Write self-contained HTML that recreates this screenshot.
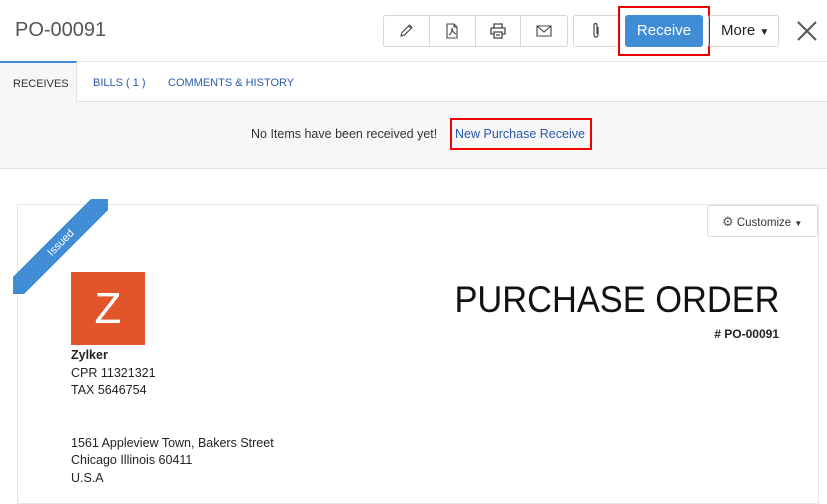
<!DOCTYPE html>
<html><head><meta charset="utf-8"><style>
*{box-sizing:border-box;margin:0;padding:0}
body{width:827px;height:489px;overflow:hidden;background:#fff;font-family:"Liberation Sans",sans-serif;position:relative;color:#222}
.abs{position:absolute}
.title{left:15px;top:19px;font-size:20px;color:#555}
.grp{top:15px;height:32px;border:1px solid #d6d6d6;border-radius:3px;display:flex;background:#fff}
.grp div{width:46px;height:30px;border-right:1px solid #d6d6d6;display:flex;align-items:center;justify-content:center}
.grp div:last-child{border-right:none}
.recv{left:625px;top:15px;width:78px;height:32px;background:#408dd6;border-radius:3px;color:#fff;font-size:15px;text-align:center;line-height:32px}
.redbox{border:2px solid #e00}
.more{left:708px;top:15px;width:71px;height:32px;border:1px solid #d6d6d6;border-radius:3px;font-size:15px;line-height:30px;padding-left:12px;color:#222}
.tabs{top:61px;left:0;width:827px;height:41px;border-top:1px solid #e6e6e6;border-bottom:1px solid #e2e2e2;font-size:11px}
.band{top:102px;left:0;width:827px;height:67px;background:#f7f7f7;border-bottom:1px solid #e2e2e2}
.card{left:17px;top:204px;width:802px;height:300px;border:1px solid #e6e6e6}
</style></head><body>
<div class="abs title">PO-00091</div>
<div class="abs grp" style="left:383px;width:185px">
<div><svg width="16" height="16" viewBox="0 0 16 16" fill="none" stroke="#444" stroke-width="1.1"><path d="M3 13l1-3.5 7.5-7.5 2.5 2.5-7.5 7.5z M10.5 3l2.5 2.5"/></svg></div>
<div><svg width="14" height="16" viewBox="0 0 14 16" fill="none" stroke="#444" stroke-width="1.1"><path d="M2 1h7l3 3v11H2z M9 1v3h3 M4 12c2-1 3-4 3-7 0 3 2 5 4 6"/></svg></div>
<div><svg width="18" height="16" viewBox="0 0 18 16" fill="none" stroke="#444" stroke-width="1.3"><path d="M5 5V1h8v4 M2 5h14v6h-3 M5 11H2V5 M5 9h8v6H5z M7 12h4"/></svg></div>
<div><svg width="16" height="12" viewBox="0 0 16 12" fill="none" stroke="#444" stroke-width="1.1"><path d="M1 1h14v10H1z M1 1l7 6 7-6"/></svg></div>
</div>
<div class="abs grp" style="left:573px;width:46px"><div><svg width="10" height="18" viewBox="0 0 10 18" fill="none" stroke="#444" stroke-width="1.2"><path d="M7 5v8a2 2 0 01-4 0V3a1.5 1.5 0 013 0v9"/></svg></div></div>
<div class="abs redbox" style="left:618px;top:6px;width:92px;height:50px"></div>
<div class="abs recv">Receive</div>
<div class="abs more">More <span style="font-size:10px">▼</span></div>
<svg class="abs" style="left:797px;top:21px" width="20" height="20" viewBox="0 0 20 20" stroke="#555" stroke-width="2"><path d="M1 1l18 18M19 1L1 19"/></svg>
<div class="abs tabs">
<div class="abs" style="left:0;top:-1px;width:77px;height:41px;background:#f7f7f7;border-top:2px solid #408dd6;border-right:1px solid #e2e2e2;color:#333;padding:15px 0 0 13px">RECEIVES</div>
<div class="abs" style="left:93px;top:15px;color:#2a5aa8">BILLS ( 1 )</div>
<div class="abs" style="left:168px;top:15px;color:#2a5aa8">COMMENTS &amp; HISTORY</div>
</div>
<div class="abs band"></div>
<div class="abs" style="left:251px;top:127px;font-size:12.5px;color:#333">No Items have been received yet!</div>
<div class="abs redbox" style="left:450px;top:118px;width:142px;height:32px"></div>
<div class="abs" style="left:455px;top:127px;font-size:12.5px;color:#2a5aa8">New Purchase Receive</div>
<div class="abs card"></div>
<div class="abs" style="left:707px;top:205px;width:111px;height:32px;border:1px solid #ddd;border-radius:3px;font-size:11.5px;line-height:32px;padding-left:14px;color:#333;background:#fff"><span style="color:#555;font-size:13px">⚙</span> Customize <span style="font-size:8px">▼</span></div>
<div class="abs" style="left:13px;top:199px;width:95px;height:95px;overflow:hidden">
<div class="abs" style="left:-22px;top:34px;width:140px;height:20px;background:#408dd6;transform:rotate(-45deg);color:#fff;font-size:11px;text-align:center;line-height:20px">Issued</div>
</div>
<div class="abs" style="left:71px;top:272px;width:74px;height:73px;background:#e2542a;color:#fff;font-size:44px;text-align:center;line-height:73px">Z</div>
<div class="abs" style="left:71px;top:347px;font-size:12.5px;line-height:17.5px;color:#222"><b>Zylker</b><br>CPR 11321321<br>TAX 5646754<br><br><br>1561 Appleview Town, Bakers Street<br>Chicago Illinois 60411<br>U.S.A</div>
<div class="abs" style="right:48px;top:279px;font-size:37px;color:#111;transform:scaleX(0.93);transform-origin:right center;white-space:nowrap">PURCHASE ORDER</div>
<div class="abs" style="right:48px;top:327px;font-size:12px;font-weight:bold;color:#222"># PO-00091</div>
</body></html>
